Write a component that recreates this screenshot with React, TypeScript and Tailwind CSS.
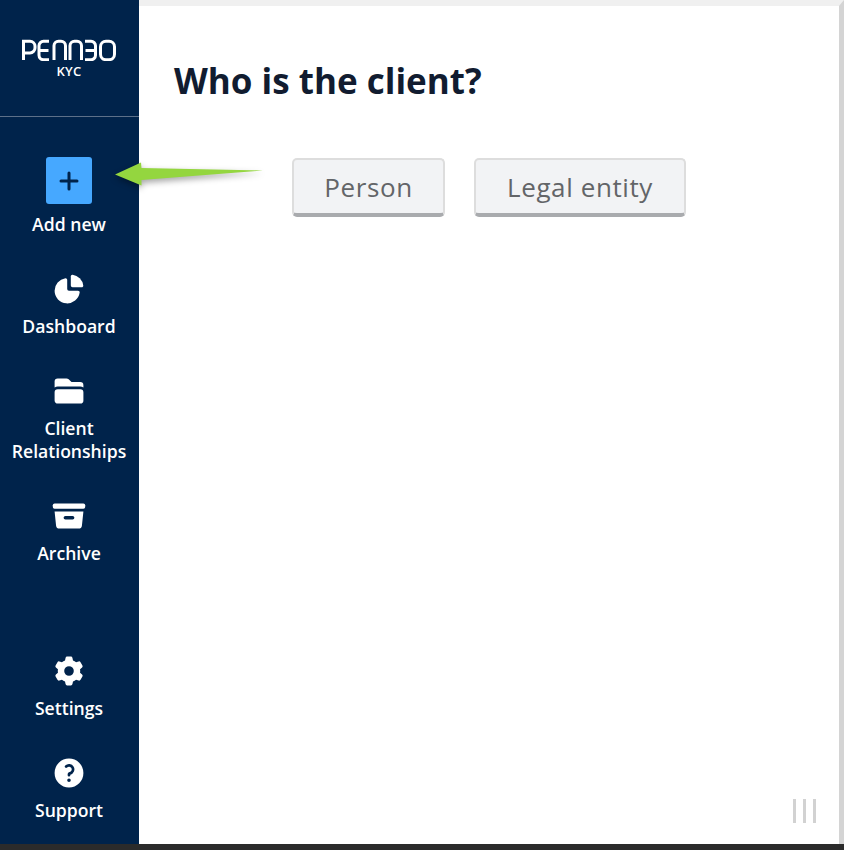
import type { ReactNode } from "react";
import {
  HiMiniArchiveBox,
  HiMiniChartPie,
  HiMiniCog6Tooth,
  HiMiniFolder,
  HiMiniQuestionMarkCircle,
} from "react-icons/hi2";

type NavItemProps = {
  icon: ReactNode;
  label: ReactNode;
  className?: string;
};

function NavItem({ icon, label, className = "" }: NavItemProps) {
  return (
    <a className={`flex flex-col items-center text-center ${className}`}>
      <span className="flex h-9 items-center justify-center text-white">{icon}</span>
      <span className="mt-2 text-[17.6px] leading-[23px] font-semibold text-white">
        {label}
      </span>
    </a>
  );
}

function Logo() {
  return (
    <svg
      width="94"
      height="22"
      viewBox="0 0 94 22"
      fill="none"
      stroke="white"
      strokeWidth="3"
      className="block"
    >
      <path d="M1.500 21V2.300H8a5 5 0 0 1 5 5v1.600a5 5 0 0 1-5 5H1.500" />
      <path d="M27 2.300h-5.500a4.500 4.500 0 0 0-4.500 4.500v9.400a4.500 4.500 0 0 0 4.500 4.500H27M17 11.500h9.500" />
      <path d="M32 21V6.800a4.500 4.500 0 0 1 4.500-4.500h2.500a4.500 4.500 0 0 1 4.500 4.500V21" />
      <path d="M48 21V6.800a4.500 4.500 0 0 1 4.500-4.500h2.500a4.500 4.500 0 0 1 4.500 4.500V21" />
      <path d="M63 2.300h6a4.500 4.500 0 0 1 4.500 4.500v9.400a4.500 4.500 0 0 1-4.500 4.500h-6M63.500 11.500h10" />
      <rect x="78.500" y="2.300" width="14" height="18.400" rx="5.500" />
    </svg>
  );
}

export default function App() {
  return (
    <div className="relative flex h-[850px] w-[844px] flex-col overflow-hidden bg-white font-['Open_Sans',sans-serif]">
      <div className="flex min-h-0 flex-1">
        <aside className="flex w-[139px] shrink-0 flex-col bg-[#00234b]">
          <div className="flex h-[117px] shrink-0 flex-col items-center border-b border-[#5d7089] pt-[39px] pr-[1px]">
            <Logo />
            <span className="mt-[2px] text-[13px] leading-[16px] font-semibold tracking-[0.3px] text-white">
              KYC
            </span>
          </div>

          <nav className="flex flex-1 flex-col pt-10 pr-[1px] pb-[22px]">
            <a className="flex flex-col items-center text-center">
              <span className="flex h-[47px] w-[46px] items-center justify-center rounded-[3px] bg-[#46a8ff] text-[#00234b]">
                <svg
                  width="20"
                  height="20"
                  viewBox="0 0 20 20"
                  fill="none"
                  stroke="currentColor"
                  strokeWidth="3"
                  strokeLinecap="round"
                >
                  <path d="M10 2v16M2 10h16" />
                </svg>
              </span>
              <span className="mt-[9px] text-[17.6px] leading-[23px] font-semibold text-white">
                Add new
              </span>
            </a>
            <NavItem
              className="mt-[35px]"
              icon={<HiMiniChartPie size={36} />}
              label="Dashboard"
            />
            <NavItem
              className="mt-[35px]"
              icon={<HiMiniFolder size={36} />}
              label={
                <>
                  Client
                  <br />
                  Relationships
                </>
              }
            />
            <NavItem
              className="mt-[35px]"
              icon={<HiMiniArchiveBox size={36} />}
              label="Archive"
            />
            <NavItem
              className="mt-auto"
              icon={<HiMiniCog6Tooth size={32} />}
              label="Settings"
            />
            <NavItem
              className="mt-[35px]"
              icon={<HiMiniQuestionMarkCircle size={36} />}
              label="Support"
            />
          </nav>
        </aside>

        <main className="relative flex min-w-0 flex-1 flex-col border-t-[6px] border-r-[5px] border-t-[#f0f0f0] border-r-[#d4d4d4] pl-[35px]">
          <h1 className="mt-[51px] text-[35px] leading-[48px] font-bold text-[#111c30]">
            Who is the client?
          </h1>
          <div className="mt-[53px] ml-[118px] flex gap-[29px]">
            <button
              type="button"
              className="h-[59px] w-[153px] rounded-[5px] border-2 border-b-4 border-[#dddddd] border-b-[#a9abae] bg-[#f2f3f5] pt-[1px] text-[26px] font-medium tracking-[0.6px] text-[#636568]"
            >
              Person
            </button>
            <button
              type="button"
              className="h-[59px] w-[212px] rounded-[5px] border-2 border-b-4 border-[#dddddd] border-b-[#a9abae] bg-[#f2f3f5] pt-[1px] text-[26px] font-medium tracking-[0.6px] text-[#636568]"
            >
              Legal entity
            </button>
          </div>

          <div className="absolute right-[23px] bottom-[21px] flex gap-[7px]">
            <span className="h-6 w-[3px] bg-[#d2d2d2]" />
            <span className="h-6 w-[3px] bg-[#d2d2d2]" />
            <span className="h-6 w-[3px] bg-[#d2d2d2]" />
          </div>
        </main>
      </div>

      <div className="h-[6px] shrink-0 bg-[#2b2b2b]" />

      <svg
        className="absolute top-[155px] left-[108px] drop-shadow-[0_3px_3px_rgba(0,0,0,0.35)]"
        width="164"
        height="40"
        viewBox="0 0 164 40"
      >
        <path d="M7 19.500 33 7.500 33.500 13 155 15.500 33.500 25 33.500 30.500Z" fill="#94d63f" />
      </svg>
    </div>
  );
}
